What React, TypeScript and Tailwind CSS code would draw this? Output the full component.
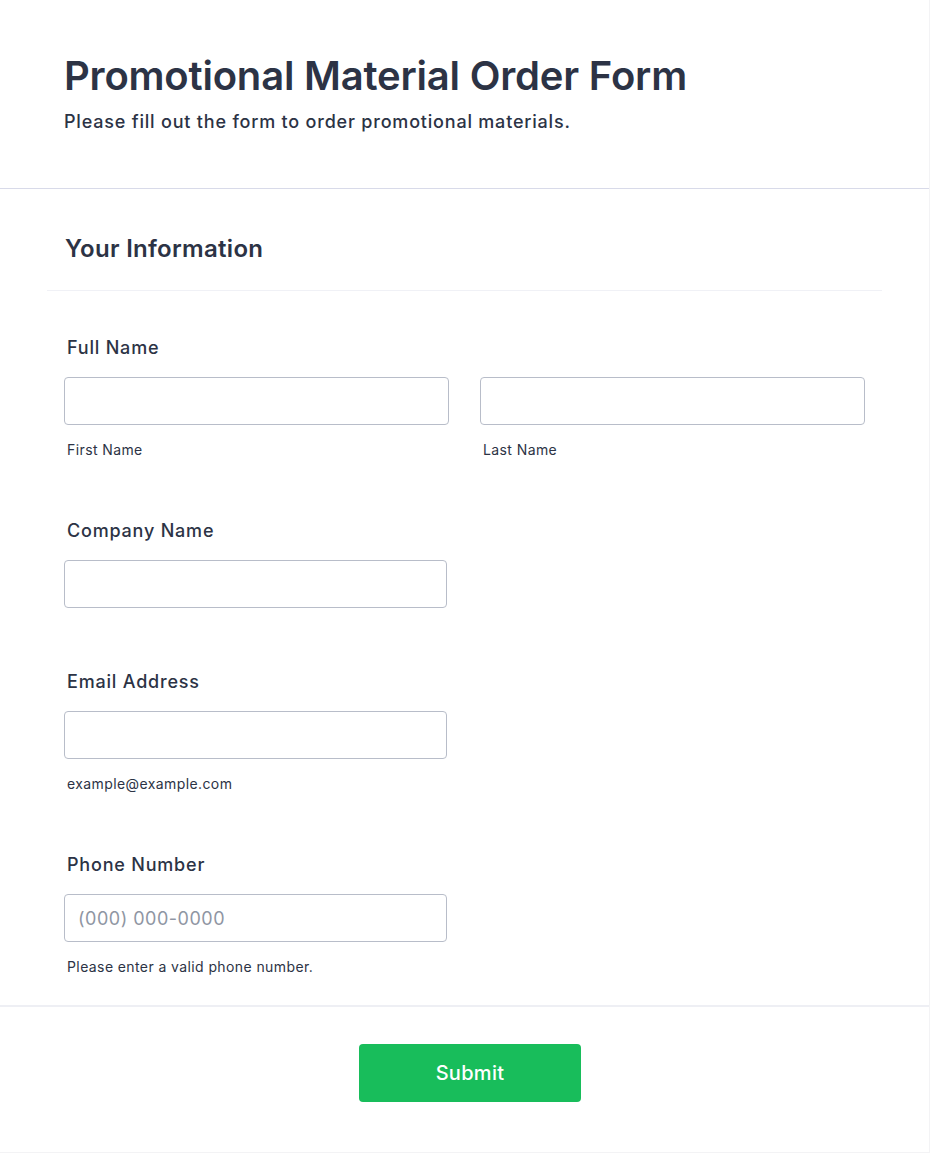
import React from "react";

const font = { fontFamily: "Inter, 'Noto Sans', sans-serif" };

function Label({ children }: { children: React.ReactNode }) {
  return (
    <label className="block pl-[3px] text-[18px] leading-[24px] font-medium tracking-[0.8px] text-[#2c3345]">
      {children}
    </label>
  );
}

function Sub({ children }: { children: React.ReactNode }) {
  return (
    <div className="mt-[15px] pl-[3px] text-[14px] leading-[20px] tracking-[0.4px] text-[#2c3345]">{children}</div>
  );
}

function Input({ className = "", placeholder }: { className?: string; placeholder?: string }) {
  return (
    <input
      type="text"
      placeholder={placeholder}
      className={
        "block h-[48px] rounded-[4px] border border-[#b8bdc9] bg-white px-[13px] text-[18px] tracking-[0.5px] text-[#2c3345] outline-none placeholder:text-[#8f96a3] " +
        className
      }
      style={font}
    />
  );
}

export default function App() {
  return (
    <div className="min-h-[1153px] w-[930px] bg-white" style={font}>
      <div className="w-[930px] border-r border-b border-[#f3f3f5] pb-[50px]">
        {/* Header */}
        <div className="px-[64px] pt-[52px] pb-[54px]">
          <h1 className="text-[40px] leading-[48px] font-semibold tracking-[-0.2px] text-[#2c3345]">
            Promotional Material Order Form
          </h1>
          <p className="mt-[10px] text-[18px] leading-[24px] font-medium tracking-[0.8px] text-[#2c3345]">
            Please fill out the form to order promotional materials.
          </p>
        </div>
        <div className="h-px bg-[#d8dae9]" />

        {/* Section */}
        <div className="mx-[47px] w-[835px]">
          <div className="pt-[44px] pb-[25px] pl-[18px]">
            <h2 className="text-[24px] leading-[32px] font-semibold tracking-[0.3px] text-[#2c3345]">Your Information</h2>
          </div>
          <div className="h-px bg-[#f0f1f6]" />

          <div className="px-[17px] pt-[45px] pb-[28px]">
            {/* Full name */}
            <div>
              <Label>Full Name</Label>
              <div className="mt-[17px] grid grid-cols-2 gap-[31px]">
                <div>
                  <Input className="w-full" />
                  <Sub>First Name</Sub>
                </div>
                <div>
                  <Input className="w-full" />
                  <Sub>Last Name</Sub>
                </div>
              </div>
            </div>

            {/* Company */}
            <div className="mt-[59px]">
              <Label>Company Name</Label>
              <Input className="mt-[17px] w-[383px]" />
            </div>

            {/* Email */}
            <div className="mt-[62px]">
              <Label>Email Address</Label>
              <Input className="mt-[17px] w-[383px]" />
              <Sub>example@example.com</Sub>
            </div>

            {/* Phone */}
            <div className="mt-[59px]">
              <Label>Phone Number</Label>
              <Input className="mt-[17px] w-[383px]" placeholder="(000) 000-0000" />
              <Sub>Please enter a valid phone number.</Sub>
            </div>
          </div>
        </div>

        <div className="h-[2px] bg-[#eeeff4]" />

        <div className="flex justify-center pt-[37px] pl-[11px]">
          <button
            type="button"
            className="h-[58px] w-[222px] rounded-[4px] bg-[#18bd5b] text-[20px] font-medium tracking-[0.3px] text-white"
            style={font}
          >
            Submit
          </button>
        </div>
      </div>
    </div>
  );
}
